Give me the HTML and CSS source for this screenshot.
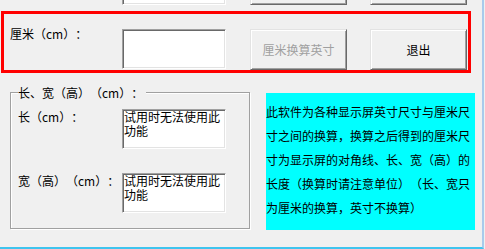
FILE: index.html
```html
<!DOCTYPE html>
<html lang="zh-CN">
<head>
<meta charset="utf-8">
<title>尺寸换算</title>
<link rel="stylesheet" href="styles.css">
</head>
<body>
<div class="frame">
  <div class="top-row">
    <div class="field"></div>
    <div class="btn btn-disabled"></div>
    <div class="btn"></div>
  </div>

  <div class="red-row">
    <div class="row-label">厘米（cm）：</div>
    <div class="field"></div>
    <div class="btn btn-disabled">厘米换算英寸</div>
    <div class="btn">退出</div>
  </div>

  <div class="main">
    <div class="group">
      <span class="legend">长、宽（高）（cm）：</span>
      <div class="group-row">
        <div class="group-label">长（cm）：</div>
        <div class="field memo">试用时无法使用此功能</div>
      </div>
      <div class="group-row">
        <div class="group-label">宽（高）（cm）：</div>
        <div class="field memo">试用时无法使用此功能</div>
      </div>
    </div>
    <div class="info">此软件为各种显示屏英寸尺寸与厘米尺寸之间的换算，换算之后得到的厘米尺寸为显示屏的对角线、长、宽（高）的长度（换算时请注意单位）（长、宽只为厘米的换算，英寸不换算）</div>
  </div>
</div>
</body>
</html>
```
FILE: styles.css
```css
* {
  box-sizing: border-box;
}

html, body {
  margin: 0;
  padding: 0;
  background: #f0f0f0;
  overflow: hidden;
}

body {
  font-family: "Noto Sans CJK SC", "Noto Sans", sans-serif;
  font-size: 12px;
  line-height: 12px;
  color: #000;
  text-spacing-trim: space-all;
}

.frame {
  width: 484px;
  height: 249px;
  border-right: 2px solid #a8cbeb;
  border-bottom: 2px solid #3fc4ee;
  overflow: hidden;
}

.top-row {
  display: flex;
  align-items: flex-end;
  height: 41px;
  margin-top: -36px;
  padding-left: 122px;
}

.field {
  width: 104px;
  height: 40px;
  background: #fff;
  border: 1px solid;
  border-color: #a0a0a0 #ffffff #ffffff #a0a0a0;
  box-shadow: inset 1px 1px 0 #696969, inset -1px -1px 0 #e3e3e3;
  flex: none;
}

.btn {
  width: 97px;
  height: 41px;
  margin-left: 24px;
  flex: none;
  display: flex;
  align-items: center;
  justify-content: center;
  background: #f0f0f0;
  border: 1px solid;
  border-color: #e3e3e3 #696969 #696969 #e3e3e3;
  box-shadow: inset 1px 1px 0 #ffffff, inset -1px -1px 0 #a0a0a0;
  color: #000;
}

.btn + .btn {
  margin-left: 23px;
}

.btn-disabled {
  color: #a0a0a0;
}

.red-row {
  display: flex;
  align-items: flex-start;
  width: 470px;
  height: 62px;
  margin: 6px 0 0 1px;
  padding: 15px 0 0 6px;
  border: 3px solid #ff0000;
}

.row-label {
  width: 112px;
  flex: none;
  margin-top: -1px;
}

.main {
  display: flex;
  align-items: flex-start;
  margin-top: 19px;
  padding-left: 10px;
}

.group {
  position: relative;
  width: 240px;
  height: 137px;
  flex: none;
  padding: 16px 0 15px 7px;
  border: 1px solid #a0a0a0;
  box-shadow: inset 1px 1px 0 #ffffff, 1px 1px 0 #ffffff;
  display: flex;
  flex-direction: column;
  gap: 24px;
}

.legend {
  position: absolute;
  top: -6px;
  left: 7px;
  padding-right: 3px;
  background: #f0f0f0;
  white-space: nowrap;
}

.group-row {
  display: flex;
  align-items: flex-start;
}

.group-label {
  width: 104px;
  flex: none;
  padding-top: 2px;
  white-space: nowrap;
}

.memo {
  padding: 0 1px;
  line-height: 14px;
  overflow: hidden;
}

.info {
  width: 209px;
  height: 137px;
  flex: none;
  margin: 1px 0 0 16px;
  padding-top: 7px;
  background: #00ffff;
  line-height: 24px;
}
```
